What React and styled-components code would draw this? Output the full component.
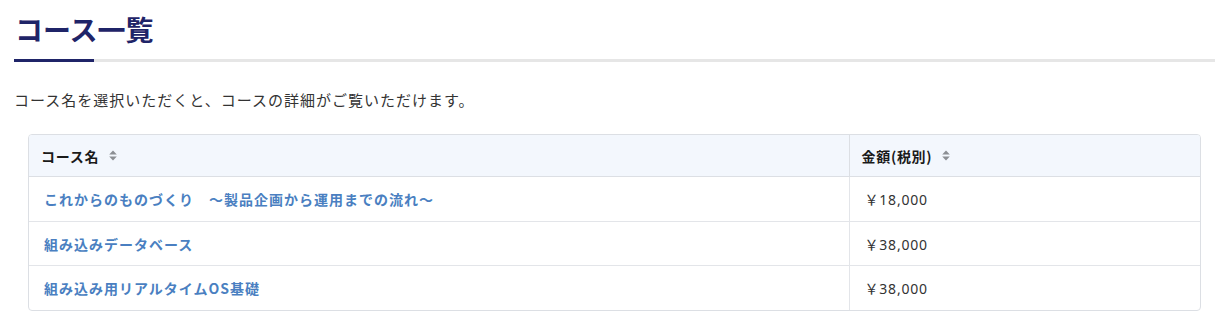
import React from 'react'
import styled, { createGlobalStyle } from 'styled-components'

const GlobalStyle = createGlobalStyle`
  html, body {
    margin: 0;
    padding: 0;
    background: #ffffff;
  }

  body {
    font-family: "Noto Sans", "Noto Sans CJK JP", sans-serif;
    color: #333333;
  }
`

const courses = [
  { name: 'これからのものづくり　～製品企画から運用までの流れ～', price: '￥18,000' },
  { name: '組み込みデータベース', price: '￥38,000' },
  { name: '組み込み用リアルタイムOS基礎', price: '￥38,000' },
]

const SortIcon = () => (
  <svg width="8" height="11" viewBox="0 0 8 11">
    <path d="M4 0.5 L7.8 4.6 H0.2 Z" fill="#8c8f94" />
    <path d="M4 10.5 L7.8 6.4 H0.2 Z" fill="#8c8f94" />
  </svg>
)

const App = () => {
  return (
    <Page>
      <GlobalStyle />

      <Title>コース一覧</Title>

      <Lead>コース名を選択いただくと、コースの詳細がご覧いただけます。</Lead>

      <TableBox>
        <Table>
          <colgroup>
            <col style={{ width: 820 }} />
            <col />
          </colgroup>
          <thead>
            <tr>
              <HeadCell>
                <HeadLabel>
                  コース名
                  <SortIcon />
                </HeadLabel>
              </HeadCell>
              <HeadCell>
                <HeadLabel>
                  金額(税別)
                  <SortIcon />
                </HeadLabel>
              </HeadCell>
            </tr>
          </thead>
          <tbody>
            {courses.map((course) => (
              <tr key={course.name}>
                <BodyCell>
                  <CourseLink href="#">{course.name}</CourseLink>
                </BodyCell>
                <BodyCell>
                  <Price>{course.price}</Price>
                </BodyCell>
              </tr>
            ))}
          </tbody>
        </Table>
      </TableBox>
    </Page>
  )
}

export default App

const Page = styled.div`
  padding: 11px 9px 0 14px;
`

const Title = styled.h1`
  position: relative;
  margin: 0;
  padding: 0 0 12px 1px;

  font-family: "Noto Sans CJK JP", sans-serif;
  font-size: 28px;
  line-height: 36px;
  font-weight: 700;
  color: #1f2468;

  border-bottom: 3px solid #e6e6e6;

  &::after {
    content: '';
    position: absolute;
    left: 0;
    bottom: -3px;

    width: 80px;
    height: 3px;
    background-color: #1f2468;
  }
`

const Lead = styled.p`
  margin: 26px 0 22px;

  font-family: "Noto Sans CJK JP", sans-serif;
  font-size: 15px;
  line-height: 24px;
  letter-spacing: 1px;
  color: #333333;
`

const TableBox = styled.div`
  margin: 0 14px;

  border: 1px solid #dcdfe4;
  border-radius: 4px;
  overflow: hidden;
`

const Table = styled.table`
  width: 100%;
  border-collapse: collapse;
  table-layout: fixed;
`

const HeadCell = styled.th`
  height: 41px;
  padding: 0 12px;

  background-color: #f3f7fd;
  border-bottom: 1px solid #dcdfe4;
  text-align: left;

  & + & {
    border-left: 1px solid #dcdfe4;
  }
`

const HeadLabel = styled.span`
  display: inline-flex;
  align-items: center;
  gap: 10px;

  font-family: "Noto Sans CJK JP", sans-serif;
  font-size: 14px;
  font-weight: 700;
  letter-spacing: 0.7px;
  color: #1a1a1a;
`

const BodyCell = styled.td`
  height: 43.7px;
  padding: 0 15px;

  border-bottom: 1px solid #e3e5e9;

  tr:last-child > & {
    border-bottom: none;
  }

  & + & {
    border-left: 1px solid #e3e5e9;
  }
`

const CourseLink = styled.a`
  font-family: "Noto Sans CJK JP", sans-serif;
  font-size: 14px;
  font-weight: 700;
  letter-spacing: 1px;
  color: #4a7fc1;
  text-decoration: none;
`

const Price = styled.span`
  font-family: "Noto Sans", "Noto Sans CJK JP", sans-serif;
  font-size: 14px;
  letter-spacing: 0.8px;
  color: #333333;
`
